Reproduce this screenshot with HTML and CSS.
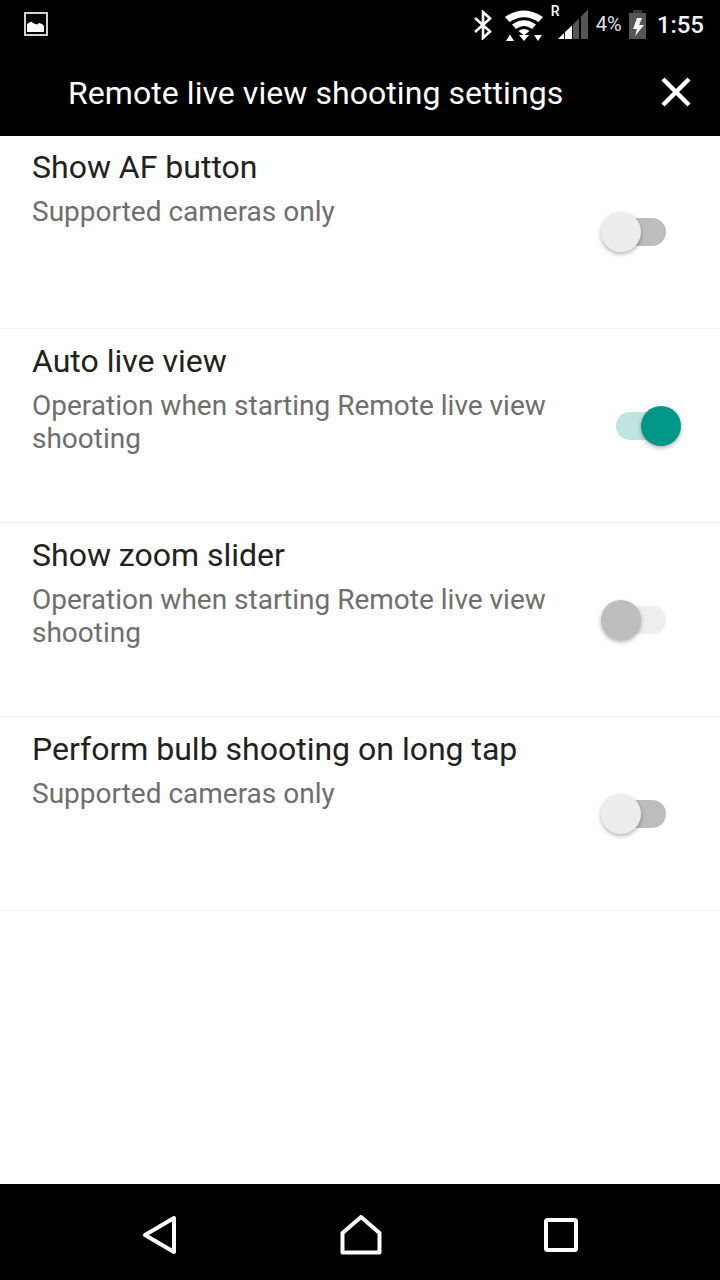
FILE: index.html
```html
<!DOCTYPE html>
<html lang="en">
<head>
<meta charset="utf-8">
<title>Remote live view shooting settings</title>
<link rel="stylesheet" href="styles.css">
</head>
<body>
<div class="screen">
  <div class="status">
    <svg class="st-pic" width="26" height="24" viewBox="0 0 26 24"><rect x="1" y="1" width="22" height="22" fill="none" stroke="#d0d0d0" stroke-width="2"/><path d="M3 20V12L7 9.500L10 11.500L13 12.500L15 11L18 12L20 14V20Z" fill="#fff"/></svg>
    <div class="st-right">
      <svg width="20" height="30" viewBox="0 0 20 30" class="st-bt"><path d="M2 8L17 21.500L10 28V2L17 8.500L2 22" fill="none" stroke="#fff" stroke-width="2.600"/></svg>
      <svg width="40" height="32" viewBox="0 0 40 32" class="st-wifi"><path d="M1 7Q20 -6 39 7L34.500 12Q20 2.500 5.500 12Z" fill="#fff"/><path d="M8 14.500Q20 6 32 14.500L28 19Q20 13 12 19Z" fill="#fff"/><path d="M14.500 21Q20 17 25.500 21L20 25.500Z" fill="#fff"/><path d="M2 31L6 24.500L10 31Z M15 25L25 25L20 31Z M30 25L38 25L34 31Z" fill="#fff"/></svg>
      <div class="st-signal">
        <span class="st-r">R</span>
        <svg width="30" height="30" viewBox="0 0 30 30"><path d="M0 29H6V23Z M7 29H14V15.500L7 22Z" fill="#fff"/><path d="M15 29H21V8.500L15 14.500Z M23 29H30V-.5L23 6.500Z" fill="#555"/></svg>
      </div>
      <span class="st-pct">4%</span>
      <svg width="18" height="30" viewBox="0 0 18 30" class="st-batt"><path d="M4 0H13V3H4Z" fill="#3a3a3a"/><path d="M0 3H17V29H0Z" fill="#555"/><path d="M8 8L4 19H8L6 26L15 15H10L13 8Z" fill="#fff"/></svg>
      <span class="st-time">1:55</span>
    </div>
  </div>
  <header class="appbar">
    <h1 class="appbar-title">Remote live view shooting settings</h1>
    <svg class="appbar-close" width="32" height="32" viewBox="0 0 32 32"><path d="M3 3L29 29M29 3L3 29" stroke="#fff" stroke-width="4.500" fill="none"/></svg>
  </header>
  <main class="list">
    <section class="row row-first">
      <div class="row-text">
        <div class="row-title">Show AF button</div>
        <div class="row-sub">Supported cameras only</div>
      </div>
      <div class="switch"><span class="track"></span><span class="thumb"></span></div>
    </section>
    <section class="row">
      <div class="row-text">
        <div class="row-title">Auto live view</div>
        <div class="row-sub">Operation when starting Remote live view shooting</div>
      </div>
      <div class="switch switch-on"><span class="track"></span><span class="thumb"></span></div>
    </section>
    <section class="row">
      <div class="row-text">
        <div class="row-title">Show zoom slider</div>
        <div class="row-sub">Operation when starting Remote live view shooting</div>
      </div>
      <div class="switch switch-disabled"><span class="track"></span><span class="thumb"></span></div>
    </section>
    <section class="row">
      <div class="row-text">
        <div class="row-title">Perform bulb shooting on long tap</div>
        <div class="row-sub">Supported cameras only</div>
      </div>
      <div class="switch"><span class="track"></span><span class="thumb"></span></div>
    </section>
  </main>
  <nav class="navbar">
    <svg width="36" height="40" viewBox="0 0 36 40"><path d="M32 3V37L3 20Z" fill="none" stroke="#fff" stroke-width="4" stroke-linejoin="round"/></svg>
    <svg width="42" height="40" viewBox="0 0 42 40"><path d="M2.500 18L21 2L39.500 18V37.500H2.500Z" fill="none" stroke="#fff" stroke-width="4" stroke-linejoin="round"/></svg>
    <svg width="34" height="34" viewBox="0 0 34 34"><rect x="2" y="2" width="30" height="30" rx="1.500" fill="none" stroke="#fff" stroke-width="4"/></svg>
  </nav>
</div>
</body>
</html>
```
FILE: styles.css
```css
* { box-sizing: border-box; }
html, body { margin: 0; padding: 0; }
body { font-family: Roboto, "Liberation Sans", sans-serif; background: #fff; }
.screen { width: 720px; height: 1280px; display: flex; flex-direction: column; overflow: hidden; background: #fff; }
.status { height: 48px; background: #000; display: flex; align-items: center; justify-content: space-between; padding: 0 16px 0 24px; color: #fff; flex: none; }
.st-right { display: flex; align-items: center; }
.st-bt { margin: 2px 11px 0 1px; }
.st-wifi { margin: 4px 14px 0 0; }
.st-signal { position: relative; width: 30px; height: 30px; margin: 2px 8px 0 0; }
.st-r { position: absolute; left: -7px; top: -6px; font-size: 14px; font-weight: 500; line-height: 14px; }
.st-pct { font-size: 20px; color: #e0e0e0; margin-right: 7px; }
.st-batt { margin: 2px 10px 0 0; }
.st-time { font-size: 24px; font-weight: 500; color: #f2f2f2; margin-top: 2px; }
.appbar { height: 88px; background: #000; display: flex; align-items: center; justify-content: space-between; padding: 0 28px 0 68px; flex: none; }
.appbar-title { margin: 2px 0 0; color: #fff; font-size: 32px; font-weight: 400; line-height: 40px; letter-spacing: .06px; }
.appbar-close { margin-top: 0; }
.list { flex: 1; min-height: 0; }
.row { height: 194px; border-bottom: 1px solid #f3f3f3; padding: 8px 32px 0; display: flex; justify-content: space-between; }
.row-first { height: 193px; padding-top: 7px; }
.row-text { width: 520px; }
.row-title { font-size: 32px; line-height: 48px; color: #212121; }
.row-sub { font-size: 28px; line-height: 33px; color: #6e6e6e; margin-top: 4px; }
.switch { position: relative; width: 80px; height: 40px; margin: 69px 7px 0 0; flex: none; }
.track { position: absolute; left: 15px; top: 6px; width: 50px; height: 28px; border-radius: 14px; background: #bdbdbd; }
.thumb { position: absolute; left: 0; top: 0; width: 40px; height: 40px; border-radius: 50%; background: #ededed; box-shadow: 0 2px 4px rgba(0,0,0,.3); }
.switch-on .track { background: #bfe5e1; }
.switch-on .thumb { left: 40px; background: #009688; }
.switch-disabled .track { background: #eeeeee; }
.switch-disabled .thumb { background: #bdbdbd; }
.navbar { height: 96px; background: #000; flex: none; display: flex; align-items: center; padding: 6px 0 0 142px; gap: 162px; }
```
